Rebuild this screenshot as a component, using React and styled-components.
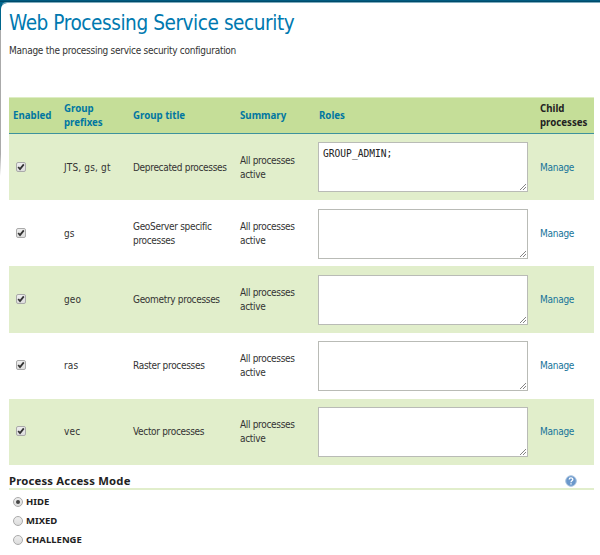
import React from "react";
import styled, { createGlobalStyle } from "styled-components";

const Global = createGlobalStyle`
  * { box-sizing: border-box; }
  body { margin: 0; background: #fff; color: #333; overflow: hidden;
    font-family: "DejaVu Sans Condensed", "DejaVu Sans", sans-serif; font-stretch: condensed; }
`;
const Page = styled.div`
  width: 600px; height: 555px; padding-top: 2px; overflow: hidden;
  background: linear-gradient(#005b80 0 1px, #004b6a 1px 2px, #00668c 2px 30px, #fff 30px);
`;
const Panel = styled.main`
  height: 553px; margin-right: -8px; padding: 0 14px 0 8px;
  background: #fff; background-clip: padding-box;
  border-top: 1px solid #7fadbf; border-left: 1px solid transparent;
  border-top-left-radius: 7px;
`;
const Edge = styled.div`
  position: absolute; left: 0; top: 30px; width: 1px; height: 146px;
  background: linear-gradient(#aaa 0 85%, #fff);
`;
const Title = styled.h1`
  margin: 0; padding-top: 5px; height: 38px; font-size: 20.6px; line-height: 30px;
  font-weight: 400; color: #0079b0; white-space: nowrap; letter-spacing: -0.45px;
`;
const Intro = styled.p`
  margin: 0; padding-top: 1px; height: 56px; font-size: 10px; line-height: 18px;
  white-space: nowrap; letter-spacing: -0.27px;
`;
const columns = "55px 69px 107px 79px 221px 54px";
const HeaderRow = styled.div`
  display: grid; grid-template-columns: ${columns}; align-items: center; height: 37px;
  background: #c5de98; border-top: 1px solid #deedc4; border-bottom: 1px solid #3e929c;
`;
const HeaderCell = styled.div`
  padding-left: ${(p) => (p.$first ? 4 : 0)}px; font: 700 9.7px/14px "Noto Sans", sans-serif;
  color: ${(p) => (p.$plain ? "#222" : "#0076a1")}; white-space: pre;
`;
const Row = styled.div`
  display: grid; grid-template-columns: ${columns}; align-items: center;
  height: 66.2px; background: ${(p) => (p.$shaded ? "#e1eecb" : "#fff")};
`;
const Cell = styled.div`
  padding-top: 1px; font-size: 10px; line-height: 14px; white-space: pre;
  letter-spacing: ${(p) => (p.$wide ? 0.15 : p.$link ? -0.27 : -0.32)}px;
  color: ${(p) => (p.$link ? "#17749a" : "#333")};
`;
const Check = styled.span`
  display: block; width: 10px; height: 10px; margin: 0 0 1px 7px; border: 1px solid #aaa;
  border-radius: 2px; background: linear-gradient(#eee, #ddd);
  svg { display: block; }
`;
const Roles = styled.div`
  position: relative; width: 210px; height: 50px; margin: 0.5px 0 0 -1px; padding: 4px; border: 1px solid #b9bbb6;
  background: #fff; font: 9.6px/14px "DejaVu Sans Mono", monospace; color: #222;
`;
const Grip = styled.svg`
  position: absolute; right: 1px; bottom: 1px;
`;
const ModeHeader = styled.div`
  display: flex; justify-content: space-between; align-items: center; width: 585px; height: 25px;
  padding: 9px 17px 0 0; border-bottom: 2px solid #e1eecb;
`;
const ModeTitle = styled.h2`
  margin: 0; font: 700 11.3px/16px "Noto Sans", sans-serif; color: #222; letter-spacing: 0.2px;
`;
const Options = styled.div`
  padding: 3px 0 0 4px;
`;
const Option = styled.div`
  display: flex; align-items: center; height: 19px; gap: 3px;
  font: 700 9.5px/14px "Noto Sans", sans-serif; color: #222;
`;
const Radio = styled.span`
  display: grid; place-items: center; width: 10px; height: 10px; border-radius: 50%;
  border: 1px solid #aaa; background: linear-gradient(#eee, #ddd);
  &::after { content: ""; width: 4px; height: 4px; border-radius: 50%; background: ${(p) => (p.$on ? "#444" : "transparent")}; }
`;

const rows = [
  ["JTS, gs, gt", "Deprecated processes", "GROUP_ADMIN;"],
  ["gs", "GeoServer specific\nprocesses", ""],
  ["geo", "Geometry processes", ""],
  ["ras", "Raster processes", ""],
  ["vec", "Vector processes", ""],
];

export default function App() {
  return (
    <Page>
      <Global />
      <Panel>
        <Title>Web Processing Service security</Title>
        <Intro>Manage the processing service security configuration</Intro>
        <HeaderRow>
          <HeaderCell $first>Enabled</HeaderCell>
          <HeaderCell>{"Group\nprefixes"}</HeaderCell>
          <HeaderCell>Group title</HeaderCell>
          <HeaderCell>Summary</HeaderCell>
          <HeaderCell>Roles</HeaderCell>
          <HeaderCell $plain>{"Child\nprocesses"}</HeaderCell>
        </HeaderRow>
        {rows.map(([prefix, title, roles], i) => (
          <Row key={prefix} $shaded={i % 2 === 0}>
            <Check>
              <svg width="8" height="8" viewBox="0 0 8 8"><path d="M1.2 4 L3 6 L6.8 1.4" fill="none" stroke="#333" strokeWidth="1.8" /></svg>
            </Check>
            <Cell $wide>{prefix}</Cell>
            <Cell>{title}</Cell>
            <Cell>{"All processes\nactive"}</Cell>
            <Roles>
              {roles}
              <Grip width="6" height="6" viewBox="0 0 6 6"><path d="M0 6 L6 0 M3 6 L6 3" stroke="#777" strokeWidth="0.9" /></Grip>
            </Roles>
            <Cell $link>Manage</Cell>
          </Row>
        ))}
        <ModeHeader>
          <ModeTitle>Process Access Mode</ModeTitle>
          <svg width="12" height="12" viewBox="0 0 12 12">
            <circle cx="6" cy="6" r="5.3" fill="#6b98cb" stroke="#a9c3df" />
            <path d="M4.2 4.6 C4.2 2.4 7.8 2.4 7.8 4.5 C7.8 5.8 6 5.8 6 7.2 M6 8.2 V9.4" fill="none" stroke="#fff" strokeWidth="1.3" />
          </svg>
        </ModeHeader>
        <Options>
          <Option><Radio $on />HIDE</Option>
          <Option><Radio />MIXED</Option>
          <Option><Radio />CHALLENGE</Option>
        </Options>
      </Panel>
      <Edge />
    </Page>
  );
}
